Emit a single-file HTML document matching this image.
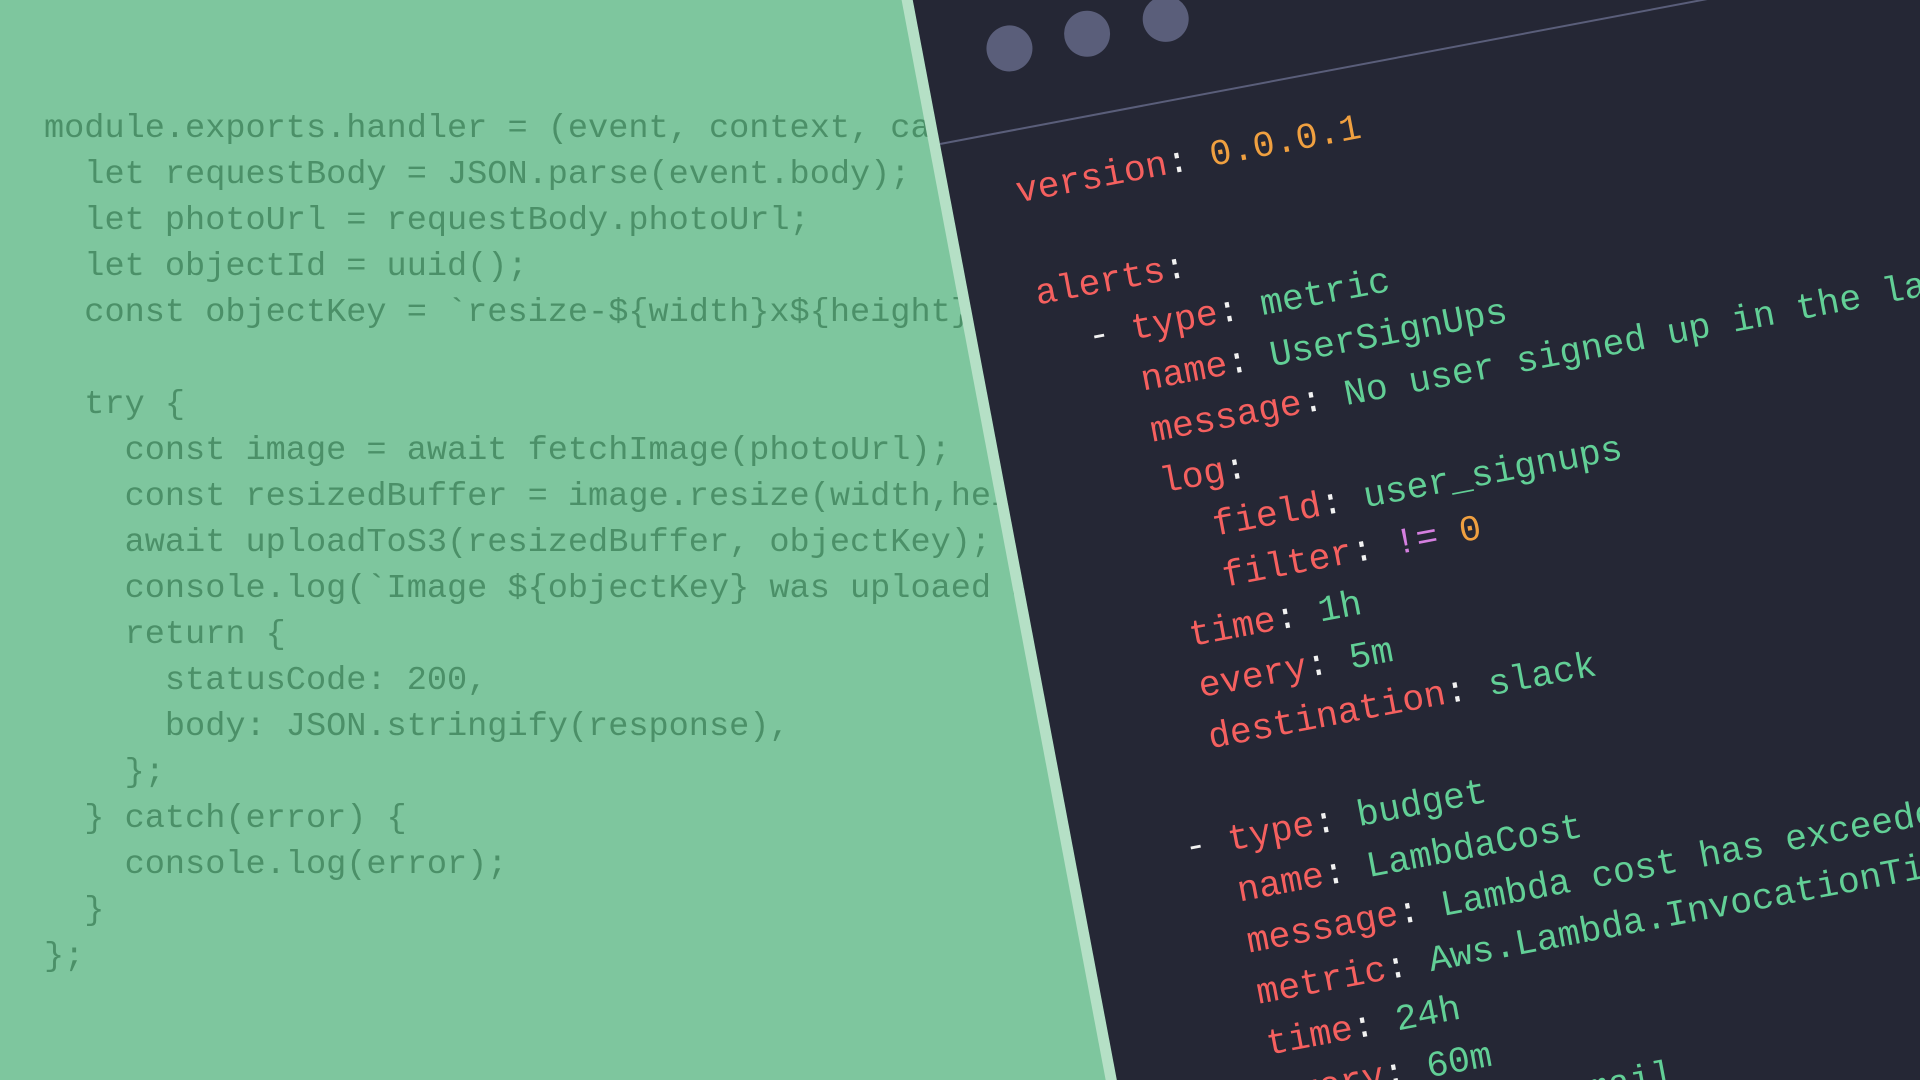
<!DOCTYPE html>
<html><head><meta charset="utf-8">
<style>
html,body{margin:0;padding:0;width:1920px;height:1080px;overflow:hidden;background:#7ec69e;}
.wrap{position:relative;width:1920px;height:1080px;overflow:hidden;background:#7ec69e;}
.left{position:absolute;left:44px;top:106px;font-family:"Liberation Mono",monospace;font-size:33.6px;line-height:46px;color:#4b9068;white-space:pre;}
.rot{position:absolute;left:940px;top:144px;width:0;height:0;transform-origin:0 0;transform:rotate(-10.7deg);}
.strip{position:absolute;left:-11px;top:-600px;width:11px;height:2400px;background:#b5e0c6;}
.panel{position:absolute;left:0;top:-600px;width:2200px;height:2400px;background:#252735;}
.sep{position:absolute;left:0;top:-1px;width:2200px;height:2px;background:#5a5e7a;}
.dot{position:absolute;width:46px;height:46px;border-radius:50%;background:#5a5e7a;top:-104px;}
.code{position:absolute;left:66px;top:37px;font-family:"Liberation Mono",monospace;font-size:36.5px;line-height:52px;color:#f2f2f2;white-space:pre;}
.k{color:#f5605f}.v{color:#62cf96}.n{color:#f0a040}.p{color:#d57fe0}
</style></head><body>
<div class="wrap">
<div class="left">module.exports.handler = (event, context, callback) => {
  let requestBody = JSON.parse(event.body);
  let photoUrl = requestBody.photoUrl;
  let objectId = uuid();
  const objectKey = `resize-${width}x${height}-${objectId}`;

  try {
    const image = await fetchImage(photoUrl);
    const resizedBuffer = image.resize(width,height);
    await uploadToS3(resizedBuffer, objectKey);
    console.log(`Image ${objectKey} was uploaed as ${objectKey}`);
    return {
      statusCode: 200,
      body: JSON.stringify(response),
    };
  } catch(error) {
    console.log(error);
  }
};</div>
<div class="rot">
  <div class="strip"></div>
  <div class="panel"></div>
  <div class="sep"></div>
  <div class="dot" style="left:63px"></div>
  <div class="dot" style="left:142px"></div>
  <div class="dot" style="left:222px"></div>
  <div class="code"><span class="k">version</span>: <span class="n">0.0.0.1</span>

<span class="k">alerts</span>:
  - <span class="k">type</span>: <span class="v">metric</span>
    <span class="k">name</span>: <span class="v">UserSignUps</span>
    <span class="k">message</span>: <span class="v">No user signed up in the last hour</span>
    <span class="k">log</span>:
      <span class="k">field</span>: <span class="v">user_signups</span>
      <span class="k">filter</span>: <span class="p">!=</span> <span class="n">0</span>
    <span class="k">time</span>: <span class="v">1h</span>
    <span class="k">every</span>: <span class="v">5m</span>
    <span class="k">destination</span>: <span class="v">slack</span>

  - <span class="k">type</span>: <span class="v">budget</span>
    <span class="k">name</span>: <span class="v">LambdaCost</span>
    <span class="k">message</span>: <span class="v">Lambda cost has exceeded</span>
    <span class="k">metric</span>: <span class="v">Aws.Lambda.InvocationTime</span>
    <span class="k">time</span>: <span class="v">24h</span>
    <span class="k">every</span>: <span class="v">60m</span>
    <span class="k">destination</span>: <span class="v">email</span></div>
</div>
</div>
</body></html>
